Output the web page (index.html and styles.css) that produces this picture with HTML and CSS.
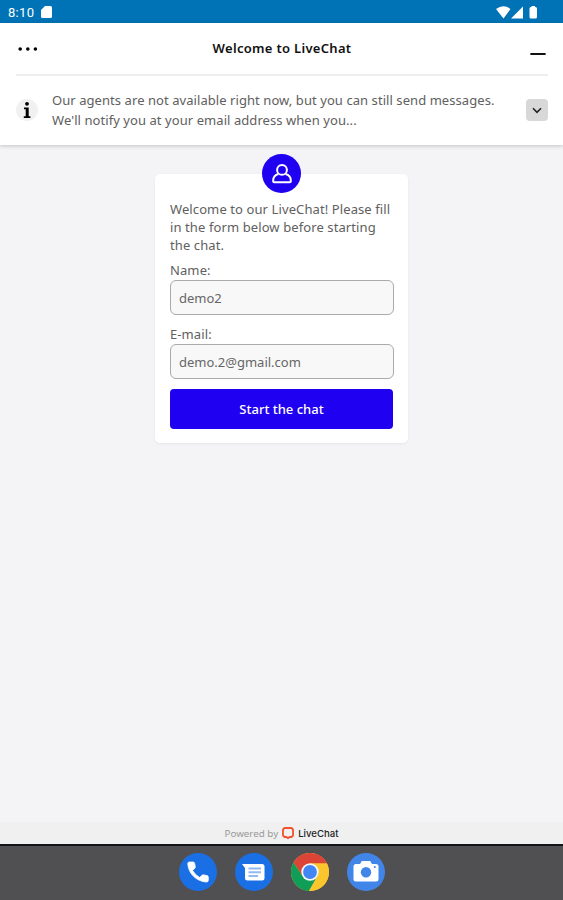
FILE: index.html
```html
<!DOCTYPE html>
<html lang="en">
<head>
  <meta charset="UTF-8">
  <meta name="viewport" content="width=device-width, initial-scale=1.0">
  <title>Welcome to LiveChat</title>
  <link rel="stylesheet" href="styles.css">
</head>
<body>
  <div class="status-bar">
    <span class="time">8:10</span>
    <svg class="sd-card" width="11" height="12" viewBox="0 0 11 12"><path d="M4 0H9.500Q11 0 11 1.500V10.500Q11 12 9.500 12H1.500Q0 12 0 10.500V4Z" fill="#fff"/></svg>
    <svg class="signals" width="45" height="13" viewBox="0 0 45 13">
      <path d="M0 3Q7.500-2.500 14.500 3L7.500 12.500Z" fill="#fff"/>
      <path d="M27 0.500V12.500H15Z" fill="#fff"/>
      <path d="M35.500 0H39V1H39.500Q41 1 41 2.500V11Q41 12.500 39.500 12.500H35Q33.500 12.500 33.500 11V2.500Q33.500 1 35 1H35.500Z" fill="#fff"/>
    </svg>
  </div>
  <header class="header">
    <div class="title-bar">
      <button class="icon-button menu" aria-label="Menu">
        <svg width="20" height="6" viewBox="0 0 20 6"><circle cx="2.200" cy="3" r="1.800"/><circle cx="9.800" cy="3" r="1.800"/><circle cx="17.400" cy="3" r="1.800"/></svg>
      </button>
      <h1>Welcome to LiveChat</h1>
      <button class="icon-button minimize" aria-label="Minimize">
        <svg width="16" height="4" viewBox="0 0 16 4"><path d="M1.200 2H14.800" stroke="#111" stroke-width="2.200" stroke-linecap="round"/></svg>
      </button>
    </div>
    <div class="notice">
      <div class="info-icon">
        <svg width="22" height="22" viewBox="0 0 22 22"><circle cx="11" cy="4.800" r="1.900"/><path d="M8 8.400H12.700V17.200H14.400V19H7.800V17.200H9.700V10.200H8Z"/></svg>
      </div>
      <p>Our agents are not available right now, but you can still send messages.<br>We'll notify you at your email address when you...</p>
      <button class="expand" aria-label="Expand">
        <svg width="10" height="7" viewBox="0 0 10 7"><path d="M1 1.300L5 5.300L9 1.300" fill="none" stroke="#222" stroke-width="1.600"/></svg>
      </button>
    </div>
  </header>
  <main class="content">
    <form class="card">
      <div class="avatar">
        <svg width="22" height="22" viewBox="0 0 22 22" fill="none" stroke="#fff" stroke-width="2"><circle cx="11" cy="6.900" r="4.900"/><path d="M7.500 11C4.500 11.800 2.200 14 2.200 17.500V18.300Q2.200 19.300 3.200 19.300H18.800Q19.800 19.300 19.800 18.300V17.500C19.800 14 17.500 11.800 14.500 11"/></svg>
      </div>
      <p class="intro">Welcome to our LiveChat! Please fill in the form below before starting the chat.</p>
      <label for="name">Name:</label>
      <input id="name" type="text" value="demo2">
      <label for="email">E-mail:</label>
      <input id="email" type="text" value="demo.2@gmail.com">
      <button class="submit" type="button">Start the chat</button>
    </form>
  </main>
  <footer class="powered">
    <span>Powered by</span>
    <svg width="12" height="12" viewBox="0 0 12 12"><path d="M2.500 1H9.500L11 2.500V8.500L9.500 10H7.500L6 11.200L4.500 10H2.500L1 8.500V2.500Z" fill="none" stroke="#f4512c" stroke-width="1.800" stroke-linejoin="round"/></svg>
    <strong>LiveChat</strong>
  </footer>
  <nav class="dock">
    <svg width="38" height="38" viewBox="0 0 38 38">
      <circle cx="19" cy="19" r="19" fill="#1a6fe4"/>
      <path d="M10.500 9H14Q15.300 9 15.600 10.300L16.300 13.700Q16.400 14.700 15.700 15.400L13.500 17.400Q16.200 22 20.700 24.500L23 22.300Q23.600 21.700 24.600 21.900L28 22.600Q29.300 22.900 29.300 24.200V27.200Q29.300 29 27.500 29C17.500 28.500 9.300 20.500 8.800 10.800Q8.700 9 10.500 9Z" fill="#fff" stroke="#fff" stroke-width="0.800"/>
    </svg>
    <svg width="38" height="38" viewBox="0 0 38 38">
      <circle cx="19" cy="19" r="19" fill="#1a6fe4"/>
      <path d="M7 11H27Q29.500 11 29.500 13.500V25Q29.500 27.500 27 27.500H12.500Q10 27.500 10 25V15Z" fill="#fff"/>
      <path d="M13.500 15.500H26M13.500 19.300H26M13.500 23H23" stroke="#91b9f3" stroke-width="1.900"/>
    </svg>
    <svg width="38" height="38" viewBox="0 0 38 38">
      <circle cx="19" cy="19" r="19" fill="#fbc52e"/>
      <path d="M19 10.500H36A19 19 0 0 0 2.550 9.500L11.600 23.300Z" fill="#dc4437"/>
      <path d="M2.550 9.500A19 19 0 0 0 18 38L26.400 23.300L19 19L11.600 23.300Z" fill="#109d58"/>
      <path d="M36 10.500H19L26.400 23.300L18 38A19 19 0 0 0 36 10.500Z" fill="#fbc52e"/>
      <circle cx="19" cy="19" r="8.700" fill="#f5f5f5"/>
      <circle cx="19" cy="19" r="6.900" fill="#4285f4"/>
    </svg>
    <svg width="38" height="38" viewBox="0 0 38 38">
      <circle cx="19" cy="19" r="19" fill="#4285e8"/>
      <path d="M9 11H13L14.800 8H23.200L25 11H29Q31.500 11 31.500 13.500V26Q31.500 28.500 29 28.500H9Q6.500 28.500 6.500 26V13.500Q6.500 11 9 11Z" fill="#fff"/>
      <circle cx="19" cy="19.300" r="5.200" fill="#4285e8"/>
      <circle cx="27.800" cy="14" r="1" fill="#4285e8"/>
    </svg>
  </nav>
</body>
</html>
```
FILE: styles.css
```css
* {
  box-sizing: border-box;
}
body {
  margin: 0;
  height: 900px;
  display: flex;
  flex-direction: column;
  background: #f4f4f6;
  color: #606060;
  font-family: "Noto Sans", sans-serif;
  font-size: 13px;
  overflow: hidden;
}
h1, p {
  margin: 0;
}
svg {
  display: block;
}
button {
  border: none;
  padding: 0;
  background: none;
  font-family: inherit;
  cursor: pointer;
}
.status-bar {
  height: 23px;
  flex-shrink: 0;
  padding: 1px 22px 0 8px;
  display: flex;
  align-items: center;
  background: #0073b6;
}
.time {
  width: 33px;
  color: #fff;
  font-family: Roboto, sans-serif;
  font-size: 13px;
  letter-spacing: 0.3px;
}
.signals {
  margin-left: auto;
}
.header {
  height: 122px;
  flex-shrink: 0;
  padding: 0 15px 0 16px;
  background: #fff;
  box-shadow: 0 1px 4px rgba(0,0,0,0.2);
}
.title-bar {
  height: 53px;
  display: flex;
  align-items: center;
  border-bottom: 2px solid #eee;
}
h1 {
  flex: 1;
  padding-bottom: 2px;
  text-align: center;
  color: #111;
  font-size: 13px;
  font-weight: 600;
  letter-spacing: 0.3px;
}
.icon-button {
  width: 22px;
}
.menu {
  padding-left: 2px;
}
.minimize {
  padding: 11px 0 0 4px;
}
.notice {
  height: 69px;
  display: flex;
  align-items: center;
}
.info-icon {
  width: 22px;
  height: 22px;
  margin: 0 14px 2px 0;
  border-radius: 50%;
  background: #f1f1f1;
}
.notice p {
  flex: 1;
  padding-bottom: 2px;
  line-height: 20px;
  letter-spacing: 0.065px;
  white-space: nowrap;
}
.expand {
  width: 22px;
  height: 22px;
  margin-bottom: 1px;
  display: flex;
  align-items: center;
  justify-content: center;
  border-radius: 4px;
  background: #d8d8d8;
}
.content {
  flex: 1;
  padding-top: 29px;
}
.card {
  position: relative;
  width: 253px;
  height: 269px;
  margin-left: 155px;
  padding: 26px 15px 14px;
  display: flex;
  flex-direction: column;
  border-radius: 5px;
  background: #fff;
  box-shadow: 0 1px 3px rgba(0,0,0,0.06);
}
.avatar {
  position: absolute;
  top: -20px;
  left: 107px;
  width: 39px;
  height: 39px;
  display: flex;
  align-items: center;
  justify-content: center;
  border-radius: 50%;
  background: #2000f0;
}
.intro {
  line-height: 18px;
  margin-bottom: 6px;
  letter-spacing: 0.1px;
}
label {
  height: 20px;
  line-height: 20px;
  letter-spacing: 0.1px;
}
input {
  width: 224px;
  height: 35px;
  margin-bottom: 9px;
  padding: 0 8px;
  border: 1px solid #aaa;
  border-radius: 6px;
  background: #f8f8f8;
  color: #666;
  font-family: inherit;
  font-size: 13px;
}
.submit {
  height: 40px;
  margin-top: 1px;
  border-radius: 4px;
  background: #2000f0;
  color: #fff;
  font-size: 13px;
  font-weight: 500;
}
.powered {
  height: 22px;
  flex-shrink: 0;
  display: flex;
  align-items: center;
  justify-content: center;
  gap: 4px;
  background: #f0f0f0;
  color: #999;
  font-size: 9.8px;
}
.powered strong {
  color: #222;
  font-family: Inter, sans-serif;
  font-size: 9.6px;
  font-weight: 500;
}
.dock {
  height: 56px;
  flex-shrink: 0;
  padding-bottom: 2px;
  display: flex;
  align-items: center;
  justify-content: center;
  gap: 18px;
  border-top: 2px solid #111519;
  background: #505053;
}
```
